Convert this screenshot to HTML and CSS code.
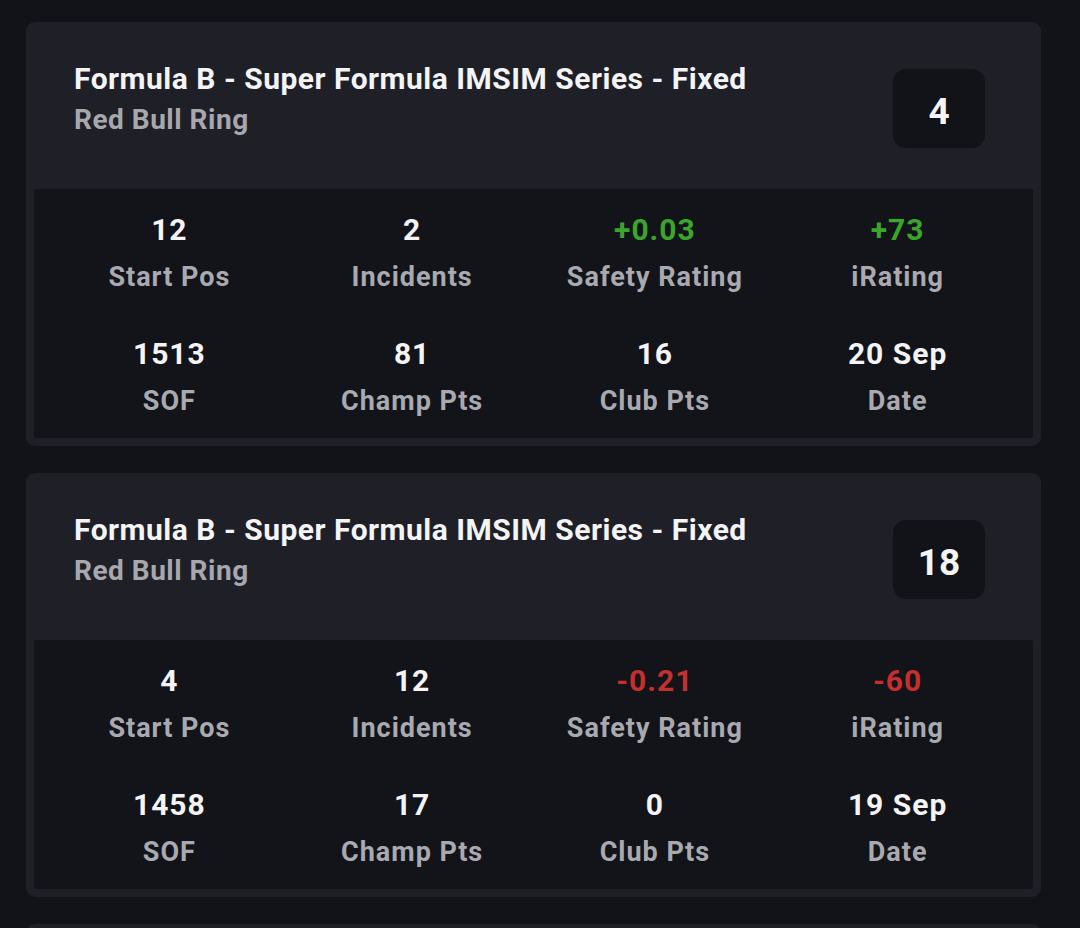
FILE: index.html
```html
<!DOCTYPE html>
<html lang="en">
<head>
<meta charset="utf-8">
<title>Race results</title>
<link rel="stylesheet" href="styles.css">
</head>
<body>
<div class="page">
  <section class="card">
    <div class="card-head">
      <div class="titles">
        <div class="series">Formula B - Super Formula IMSIM Series - Fixed</div>
        <div class="track">Red Bull Ring</div>
      </div>
      <div class="badge">4</div>
    </div>
    <div class="stats">
      <div class="stat"><div class="val">12</div><div class="lbl">Start Pos</div></div>
      <div class="stat"><div class="val">2</div><div class="lbl">Incidents</div></div>
      <div class="stat"><div class="val pos">+0.03</div><div class="lbl">Safety Rating</div></div>
      <div class="stat"><div class="val pos">+73</div><div class="lbl">iRating</div></div>
      <div class="stat"><div class="val">1513</div><div class="lbl">SOF</div></div>
      <div class="stat"><div class="val">81</div><div class="lbl">Champ Pts</div></div>
      <div class="stat"><div class="val">16</div><div class="lbl">Club Pts</div></div>
      <div class="stat"><div class="val">20 Sep</div><div class="lbl">Date</div></div>
    </div>
  </section>
  <section class="card">
    <div class="card-head">
      <div class="titles">
        <div class="series">Formula B - Super Formula IMSIM Series - Fixed</div>
        <div class="track">Red Bull Ring</div>
      </div>
      <div class="badge">18</div>
    </div>
    <div class="stats">
      <div class="stat"><div class="val">4</div><div class="lbl">Start Pos</div></div>
      <div class="stat"><div class="val">12</div><div class="lbl">Incidents</div></div>
      <div class="stat"><div class="val neg">-0.21</div><div class="lbl">Safety Rating</div></div>
      <div class="stat"><div class="val neg">-60</div><div class="lbl">iRating</div></div>
      <div class="stat"><div class="val">1458</div><div class="lbl">SOF</div></div>
      <div class="stat"><div class="val">17</div><div class="lbl">Champ Pts</div></div>
      <div class="stat"><div class="val">0</div><div class="lbl">Club Pts</div></div>
      <div class="stat"><div class="val">19 Sep</div><div class="lbl">Date</div></div>
    </div>
  </section>
  <section class="card card-peek"></section>
</div>
</body>
</html>
```

FILE: styles.css
```css
html, body {
  margin: 0;
  padding: 0;
  background: #121219;
  height: 100%;
  overflow: hidden;
}
body {
  font-family: Roboto, "Liberation Sans", sans-serif;
  color: #f2f2f4;
}
.page {
  padding: 22px 39px 0 26px;
  display: flex;
  flex-direction: column;
  gap: 27px;
}
.card {
  background: #1f1f27;
  border-radius: 9px;
  overflow: hidden;
  flex-shrink: 0;
}
.card-peek {
  height: 60px;
}
.card-head {
  height: 167px;
  box-sizing: border-box;
  padding: 39px 56px 0 48px;
  display: flex;
  justify-content: space-between;
  align-items: flex-start;
}
.series {
  font-size: 30px;
  line-height: 36px;
  font-weight: 700;
  letter-spacing: 0.5px;
  color: #f4f4f6;
}
.track {
  margin-top: 6px;
  font-size: 28px;
  line-height: 34px;
  font-weight: 700;
  letter-spacing: 0.5px;
  color: #a7a7ae;
}
.badge {
  margin-top: 8px;
  width: 92px;
  height: 79px;
  box-sizing: border-box;
  padding-top: 5px;
  border-radius: 13px;
  background: #121219;
  display: flex;
  align-items: center;
  justify-content: center;
  font-size: 37px;
  font-weight: 700;
  color: #f4f4f6;
}
.stats {
  margin: 0 8px 8px;
  background: #13131a;
  border-radius: 2px;
  padding: 24px 14px 21px;
  display: grid;
  grid-template-columns: repeat(4, 1fr);
  row-gap: 44px;
}
.stat {
  display: flex;
  flex-direction: column;
  align-items: center;
  text-align: center;
}
.val {
  font-size: 30px;
  line-height: 34px;
  font-weight: 700;
  letter-spacing: 1px;
  color: #f4f4f6;
}
.val.pos { color: #3aa62a; }
.val.neg { color: #c5302c; }
.lbl {
  margin-top: 14px;
  font-size: 27px;
  line-height: 32px;
  font-weight: 700;
  letter-spacing: 1px;
  color: #a9a9b0;
}
```
